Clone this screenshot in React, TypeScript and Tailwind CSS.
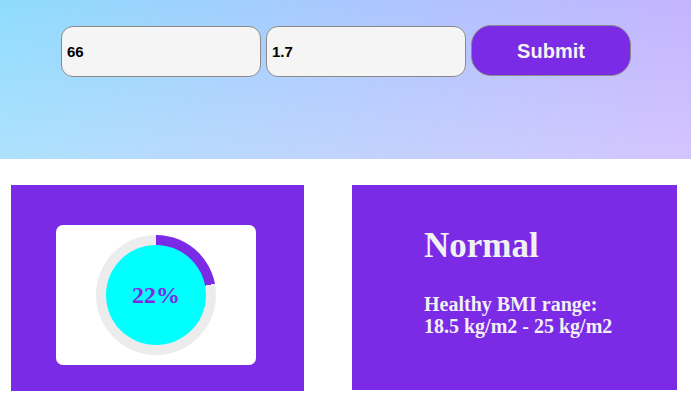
import React from "react";

export default function App() {
  const pct = 22;
  const deg = (pct / 100) * 360;
  return (
    <div className="w-[691px] h-[400px] bg-white overflow-hidden">
      <div className="h-[159px] bg-[linear-gradient(to_bottom,rgba(255,240,255,0),rgba(255,240,255,0.28)),linear-gradient(to_right,#8fdcfd,#c4b4fe)] pt-[25px]">
        <div className="flex justify-center items-start gap-[5px] pl-[1px]">
          <input
            defaultValue="66"
            className="mt-[1px] w-[200px] h-[51px] rounded-[12px] border border-[#8a8a8a] bg-[#f5f5f5] pl-[5px] text-[15px] font-bold text-black outline-none [font-family:'Liberation_Sans',Arial,sans-serif]"
          />
          <input
            defaultValue="1.7"
            className="mt-[1px] w-[200px] h-[51px] rounded-[12px] border border-[#8a8a8a] bg-[#f5f5f5] pl-[5px] text-[15px] font-bold text-black outline-none [font-family:'Liberation_Sans',Arial,sans-serif]"
          />
          <button className="w-[160px] h-[51px] rounded-[20px] border border-[#8a8a8a] bg-[#7b2ae6] text-[20px] font-bold text-[#f4f4f4] [font-family:'Liberation_Sans',Arial,sans-serif]">
            Submit
          </button>
        </div>
      </div>
      <div className="flex items-start pt-[26px] pl-[11px] gap-[48px] [font-family:'Liberation_Serif','Times_New_Roman',serif]">
        <div className="w-[293px] h-[206px] bg-[#7b2ae6] pt-[40px] pl-[45px]">
          <div className="w-[200px] h-[140px] bg-white rounded-[7px] pt-[10px] flex justify-center">
            <div
              className="w-[120px] h-[120px] rounded-full flex items-center justify-center"
              style={{ background: `conic-gradient(#7b2ae6 ${deg}deg, #ececec 0deg)` }}
            >
              <div className="w-[100px] h-[100px] rounded-full bg-[#00ffff] flex items-center justify-center">
                <span className="text-[24px] font-bold text-[#7b2ae6] leading-none">22%</span>
              </div>
            </div>
          </div>
        </div>
        <div className="w-[325px] h-[205px] bg-[#7b2ae6] pt-[41px] pl-[72px] text-[#f1f1f4]">
          <h1 className="text-[35px] font-bold leading-[39px]">Normal</h1>
          <p className="mt-[28px] text-[20px] font-bold leading-[22px]">
            Healthy BMI range:
            <br />
            18.5 kg/m2 - 25 kg/m2
          </p>
        </div>
      </div>
    </div>
  );
}
